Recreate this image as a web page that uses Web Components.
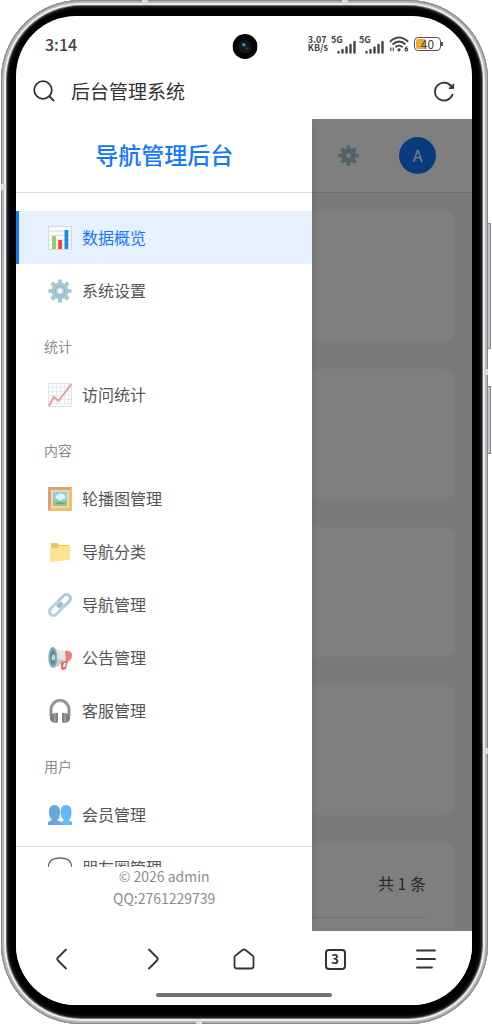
<!DOCTYPE html>
<html lang="zh-CN">
<head>
<meta charset="utf-8">
<meta name="viewport" content="width=device-width, initial-scale=1">
<title>后台管理系统</title>
<style>
    :root
    {
        --primary: #1677ff;
        --text: #555;
        --muted: #8c8c8c;
        --line: #dcdcdc;
        --ink: #333;
    }

    body
    {
        margin: 0;
        background: #fff;
        font-family: "Noto Sans CJK SC", "Noto Sans", sans-serif;
        color: var(--text);
    }
</style>
</head>
<body>

<phone-frame>
    <status-bar></status-bar>
    <address-bar>后台管理系统</address-bar>
    <admin-page>
        <side-drawer slot="drawer">
            <span slot="title">导航管理后台</span>
            <nav-item icon="chart" active>数据概览</nav-item>
            <nav-item icon="gear">系统设置</nav-item>
            <nav-section>统计</nav-section>
            <nav-item icon="trend">访问统计</nav-item>
            <nav-section>内容</nav-section>
            <nav-item icon="picture">轮播图管理</nav-item>
            <nav-item icon="folder">导航分类</nav-item>
            <nav-item icon="link">导航管理</nav-item>
            <nav-item icon="horn">公告管理</nav-item>
            <nav-item icon="headphone">客服管理</nav-item>
            <nav-section>用户</nav-section>
            <nav-item icon="users">会员管理</nav-item>
            <nav-item icon="bubble">朋友圈管理</nav-item>
            <div slot="footer">© 2026 admin</div>
            <div slot="footer">QQ:2761229739</div>
        </side-drawer>
        <stat-card></stat-card>
        <stat-card></stat-card>
        <stat-card></stat-card>
        <stat-card></stat-card>
        <stat-card><div>共 1 条</div></stat-card>
    </admin-page>
    <browser-nav></browser-nav>
</phone-frame>

<script>
// ICONS - all drawn on a 24x24 grid
const icons = {
    chart: `<rect x=".5" y=".5" width="23" height="23" fill="#fafafa" stroke="#d5dadd"/>
        <path d="M1 5h22M1 9.500h22M1 14h22M1 18.500h22" stroke="#d3dce0" stroke-width=".8"/>
        <path d="M4 10h4v13H4z" fill="#9ccc65"/><path d="M10.200 14h3.800v9h-3.800z" fill="#f44336"/><path d="M16.500 4h3.800v19h-3.800z" fill="#1592e6"/>`,
    gear: `<g fill="#a5c6d3"><circle cx="12" cy="12" r="8.500"/>
        <rect x="10" y=".3" width="4" height="23.400" rx="1.500"/><rect x=".3" y="10" width="23.400" height="4" rx="1.500"/>
        <g transform="rotate(45 12 12)"><rect x="10" y=".3" width="4" height="23.400" rx="1.500"/><rect x=".3" y="10" width="23.400" height="4" rx="1.500"/></g></g>
        <circle cx="12" cy="12" r="5" fill="#8bb4c5"/><circle cx="12" cy="12" r="4" fill="#b9d2dc"/><circle cx="12" cy="12" r="2.400" fill="#fff"/>`,
    trend: `<rect x=".5" y=".5" width="23" height="23" fill="#fdfdfd" stroke="#dde3e6"/>
        <path d="M4.500 0v24M8.500 0v24M12.500 0v24M16.500 0v24M20.500 0v24M0 4.500h24M0 8.500h24M0 12.500h24M0 16.500h24M0 20.500h24" stroke="#dfe6ea" stroke-width=".8"/>
        <path d="M.8 22.800 6 14l4.500 4L23.300 1.200" fill="none" stroke="#ec8b84" stroke-width="1.500"/>`,
    picture: `<path d="M0 0h24v24H0z" fill="#f0c16c"/><path d="M0 0h24l-4 4H4v16l-4 4z" fill="#dba276"/>
        <path d="M3 3h18v18H3z" fill="#eed5ad"/><path d="M5 5h14v14H5z" fill="#91cdf1"/>
        <path d="M5 14q4-2 7 0t7-1v6H5z" fill="#9bc27e"/><path d="M7 17q5-4 11 0z" fill="#6aa77d"/>
        <path d="M8 11q-1-3 2-3 1-3 4-1 3 0 3 3 0 2-3 2-2 3-4 0-2 0-2-1" fill="#e7f4fc"/>`,
    folder: `<path d="M3 4q0-1 1-1h5q1 0 1.500 1.500L11 5h10q1 0 1 1v13H2z" fill="#efc466"/>
        <path d="M2 9q0-1 1-1h5q1 0 2-1l1-1h10q1.500 0 1.500 1.500L22 19q0 1-1 1L3 22q-1 0-1-1z" fill="#fde28f"/>`,
    link: `<g fill="none" stroke-width="3"><rect x="-7.500" y="-4" width="15" height="8" rx="4" transform="translate(16 8) rotate(-45)" stroke="#a9cadb"/>
        <rect x="-7.500" y="-4" width="15" height="8" rx="4" transform="translate(8 16) rotate(-45)" stroke="#b4d2e1"/>
        <path d="m10 14 4-4" stroke="#88b2c8" stroke-width="2"/></g>`,
    horn: `<path d="M5 2 19 6v10L6 22z" fill="#e5e8ea"/><path d="m6 13 13 1v2L6 22z" fill="#c8cdd0"/>
        <path d="M17 5q6-1 7 4 0 6-6 7z" fill="#f47b74"/><path d="m13 16 7-1-2 8q-3 2-5 0z" fill="#e96d66"/><path d="m16 17 2 0-1 4h-2z" fill="#fff"/>
        <ellipse cx="4.800" cy="11.500" rx="4.500" ry="10.500" fill="#82adb6"/><ellipse cx="5" cy="11.500" rx="2.600" ry="7.500" fill="#548d9a"/><ellipse cx="5.500" cy="11.500" rx="1.800" ry="3" fill="#b7d9e2"/>`,
    headphone: `<path d="M3 17v-6a9 9.500 0 0 1 18 0v6" fill="none" stroke="#8c8c8c" stroke-width="3"/>
        <path d="M4 11a8 8.500 0 0 1 16 0" fill="none" stroke="#b8b8b8"/>
        <path d="M7 14q3-1 3 1v7q0 2-2 2-5 0-6-4-1-5 5-6M17 14q-3-1-3 1v7q0 2 2 2 5 0 6-4 1-5-5-6" fill="#808080"/>
        <path d="M7 14v10M17 14v10" stroke="#a8a8a8" stroke-width="1.200"/>`,
    users: `<path d="M1 9q0-7 5.500-7T12 9t-3 8l4 2v3H0v-3l4-2Q1 14 1 9" fill="#6aa5df"/>
        <path d="M12.500 9q0-7 5.500-7t5.500 7-3 8l3.500 2v3H13v-3l3-2q-3.500-3-3.500-8" fill="#64b9f5"/>`,
    bubble: `<path d="M12 2Q.3 2 .3 11.500T11 21q0 2-2 3 5 0 7-4.500 7.700-2 7.700-8Q23.700 2 12 2Z" fill="none" stroke="#666" stroke-width="1.300"/>
        <circle cx="6" cy="12" r="1.100" fill="#555"/><circle cx="12" cy="12" r="1.100" fill="#555"/><circle cx="18" cy="12" r="1.100" fill="#555"/>`
};

function icon(name) {
    return `<svg class="icon" viewBox="0 0 24 24" aria-hidden="true">${icons[name]}</svg>`;
}

function define(tag, render) {
    customElements.define(tag, class extends HTMLElement {
        connectedCallback() {
            if (this.shadowRoot) return;
            this.attachShadow({ mode: 'open' }).innerHTML = render(this);
        }
    });
}


// PHONE BODY
define('phone-frame', () => `
    <style>
        :host
        {
            display: block;
            position: relative;
            box-sizing: border-box;
            height: 100vh;
            margin: 0 4px 0 1px;
            padding: 16px 16px 19px 15px;
            border-radius: 80px;
            background: #000;
            box-shadow: inset 0 0 0 1px #87878b, inset 0 0 0 3px #b5b5b9, inset 0 0 0 5px #ececf0, inset 0 0 0 6px #6d6d70, inset 0 0 3px 7px #333;
        }

        .screen
        {
            display: flex;
            flex-direction: column;
            height: 100%;
            overflow: hidden;
            border-radius: 60px;
            background: #fff;
        }

        .camera
        {
            position: absolute;
            top: 34px;
            left: 50%;
            width: 25px;
            height: 25px;
            transform: translateX(-50%);
        }

        .key
        {
            position: absolute;
            left: 100%;
            box-sizing: border-box;
            width: 3px;
            border: 1px solid #8a8a8e;
            border-left: 0;
            background: #c4c4c9;
        }

        .power { top: 223px; height: 126px; }
        .volume { top: 386px; height: 68px; }

        .band
        {
            position: absolute;
            width: 6px;
            height: 6px;
            background: #dcdce0;
        }
    </style>
    <div class="screen"><slot></slot></div>
    <svg class="camera" viewBox="0 0 25 25" aria-hidden="true">
        <circle cx="12.500" cy="12.500" r="12.500" fill="#050505"/>
        <circle cx="12.500" cy="12.500" r="6" fill="#11161a" stroke="#1d1d1f"/>
        <circle cx="11.500" cy="11" r="2" fill="#27546c"/><circle cx="11" cy="10.500" r="1" fill="#6fb6d6"/><circle cx="14.500" cy="14.500" r="1.300" fill="#1d4760"/>
    </svg>
    <div class="key power"></div>
    <div class="key volume"></div>
    <div class="band" style="left: 29%; top: 0; height: 4px"></div>
    <div class="band" style="left: 70%; top: 0; height: 4px"></div>
    <div class="band" style="left: 40%; bottom: 0; height: 4px"></div>
    <div class="band" style="left: 0; top: 18%; width: 4px"></div>
    <div class="band" style="right: 0; top: 36%; width: 4px"></div>
    <div class="band" style="right: 0; top: 73%; width: 4px"></div>
`);


// STATUS BAR
const signal = `<span class="signal"><b>5G</b><svg width="25" height="16" viewBox="0 0 25 16" aria-hidden="true">
    <path d="M8.500 13v.5M12.500 11v2.500M16.500 8.500v5M20.500 6v7.500M24.500 3v10.500" stroke="#444" stroke-width="2.400" stroke-linecap="round" transform="translate(-1)"/></svg></span>`;

define('status-bar', () => `
    <style>
        :host
        {
            display: flex;
            justify-content: space-between;
            align-items: center;
            box-sizing: border-box;
            flex: none;
            height: 58px;
            padding: 0 29px 2px;
            color: #444;
        }

        time { font-size: 16px; font-weight: 500; }

        .right { display: flex; align-items: center; gap: 3px; }

        .speed { font-size: 9px; line-height: 8px; font-weight: 700; }

        .speed div { height: 8px; }

        .signal { position: relative; display: block; height: 16px; }

        .signal b { position: absolute; left: 0; top: 0; font-size: 9px; line-height: 8px; }

        .wifi { margin: 0 2px; }

        .battery { display: flex; align-items: center; }

        .cell
        {
            box-sizing: border-box;
            width: 27px;
            height: 14px;
            border: 1px solid #555;
            border-radius: 4px;
            background: linear-gradient(90deg, #f3a93c 40%, #fff 40%) content-box;
            padding: 1px;
            font-size: 12px;
            line-height: 10px;
            text-align: center;
        }

        .battery::after { content: ""; width: 2px; height: 4px; background: #555; }
    </style>
    <time>3:14</time>
    <div class="right">
        <div class="speed"><div>3.07</div><div>KB/s</div></div>
        ${signal}${signal}
        <svg class="wifi" width="20" height="16" viewBox="0 0 20 16" aria-hidden="true">
            <g fill="none" stroke="#444" stroke-width="1.800"><path d="M.8 5.800Q10-2.800 19.200 5.800M3.500 8.500q6.500-6 13 0M6.300 11.200q3.700-3.200 7.400 0"/>
            <path d="M1.800 11.500v3.500M4.300 11.500v3.500" stroke-width="1.200"/><path d="M18.500 10.500q-2.500 1-2.500 3" stroke-width="1.200"/><circle cx="17.500" cy="13.700" r="1.300" stroke-width="1.100"/></g>
            <circle cx="10" cy="13.800" r="1.600" fill="#444"/>
        </svg>
        <div class="battery"><div class="cell">40</div></div>
    </div>
`);


// ADDRESS BAR
define('address-bar', () => `
    <style>
        :host
        {
            display: flex;
            justify-content: space-between;
            align-items: center;
            flex: none;
            height: 34px;
            margin-bottom: 11px;
            padding: 0 17px;
            color: var(--ink);
        }

        button
        {
            display: flex;
            align-items: center;
            gap: 16px;
            padding: 0;
            border: 0;
            background: none;
            font: inherit;
            font-size: 19px;
            line-height: 28px;
            color: inherit;
        }

        svg { fill: none; stroke: var(--ink); stroke-width: 1.8; stroke-linecap: round; }
    </style>
    <button type="button">
        <svg width="22" height="22" viewBox="0 0 22 22" aria-hidden="true"><circle cx="10" cy="10" r="8.800"/><path d="m16.500 16.500 4 4"/></svg>
        <span><slot></slot></span>
    </button>
    <button type="button" aria-label="刷新">
        <svg width="21" height="21" viewBox="0 0 21 21" aria-hidden="true"><path d="M18.500 13.500a9 9 0 1 1-.5-7"/><path d="M19.600 3.200v4.200h-4.200z" fill="#333" stroke-width="1"/></svg>
    </button>
`);


// ADMIN PAGE - content dimmed below the open drawer
define('admin-page', () => `
    <style>
        :host
        {
            display: block;
            position: relative;
            flex: 1;
            min-height: 0;
            overflow: hidden;
            background: #f5f5f5;
        }

        header
        {
            display: flex;
            justify-content: flex-end;
            align-items: center;
            gap: 40px;
            height: 73px;
            padding-right: 36px;
            border-bottom: 1px solid var(--line);
            background: #fff;
        }

        button { padding: 0; border: 0; background: none; font: inherit; }

        .icon { display: block; width: 21px; height: 21px; }

        .avatar
        {
            width: 37px;
            height: 37px;
            padding-bottom: 2px;
            border-radius: 50%;
            background: var(--primary);
            color: #fff;
            font-size: 16px;
        }

        main { display: grid; gap: 28px; padding: 18px; }

        .mask { position: absolute; inset: 0; background: rgba(0, 0, 0, .5); }

        ::slotted(side-drawer) { position: absolute; top: 0; bottom: 0; left: 0; width: 65%; }
    </style>
    <header>
        <button type="button" aria-label="设置">${icon('gear')}</button>
        <button type="button" class="avatar">A</button>
    </header>
    <main><slot></slot></main>
    <div class="mask"></div>
    <slot name="drawer"></slot>
`);

define('stat-card', () => `
    <style>
        :host
        {
            display: block;
            box-sizing: border-box;
            min-height: 130px;
            padding: 27px 28px;
            border-radius: 9px;
            background: #fff;
        }

        ::slotted(div)
        {
            padding-bottom: 21px;
            border-bottom: 1px solid var(--line);
            font-size: 16px;
            line-height: 26px;
            text-align: right;
        }
    </style>
    <slot></slot>
`);


// DRAWER
define('side-drawer', () => `
    <style>
        :host
        {
            display: flex;
            flex-direction: column;
            background: #fff;
            box-shadow: 0 0 9px rgba(0, 0, 0, .15);
        }

        h1
        {
            flex: none;
            margin: 0;
            padding: 18px 0 20px;
            border-bottom: 1px solid var(--line);
            font-size: 23px;
            line-height: 35px;
            font-weight: 500;
            text-align: center;
            color: var(--primary);
        }

        nav
        {
            flex: 1;
            min-height: 0;
            margin-bottom: 64px;
            padding-top: 18px;
            overflow: hidden;
            box-sizing: border-box;
        }

        footer
        {
            position: absolute;
            right: 0;
            bottom: 0;
            left: 0;
            padding: 18px 0 22px;
            border-top: 1px solid var(--line);
            font-size: 14px;
            line-height: 22px;
            text-align: center;
            color: var(--muted);
        }
    </style>
    <h1><slot name="title"></slot></h1>
    <nav><slot></slot></nav>
    <footer><slot name="footer"></slot></footer>
`);

define('nav-section', () => `
    <style>
        :host
        {
            display: block;
            padding: 19px 28px 12px;
            font-size: 14px;
            line-height: 20px;
            color: var(--muted);
        }
    </style>
    <slot></slot>
`);

define('nav-item', (el) => `
    <style>
        :host { display: block; }

        a
        {
            display: flex;
            align-items: center;
            gap: 10px;
            height: 53px;
            padding-left: 29px;
            border-left: 3px solid transparent;
            font-size: 16px;
            line-height: 24px;
            text-decoration: none;
            color: var(--text);
        }

        span { padding-bottom: 2px; }

        :host([active]) a
        {
            border-color: var(--primary);
            background: #e6f0ff;
            color: var(--primary);
        }

        .icon { width: 24px; height: 24px; }
    </style>
    <a href="#${el.getAttribute('icon')}">${icon(el.getAttribute('icon'))}<span><slot></slot></span></a>
`);


// BROWSER BUTTONS
define('browser-nav', () => `
    <style>
        :host { display: block; flex: none; height: 74px; background: #fff; }

        nav { display: grid; grid-template-columns: repeat(5, 1fr); height: 56px; }

        button
        {
            display: flex;
            justify-content: center;
            align-items: center;
            padding: 0;
            border: 0;
            background: none;
            font: inherit;
            color: var(--ink);
        }

        svg { fill: none; stroke: var(--ink); stroke-width: 1.8; stroke-linecap: round; stroke-linejoin: round; }

        .tabs
        {
            box-sizing: border-box;
            width: 21px;
            height: 21px;
            border: 2px solid var(--ink);
            border-radius: 4px;
            font-size: 13px;
            line-height: 16px;
            font-weight: 700;
        }

        .home-line { width: 176px; height: 4px; margin: 6px auto 0; border-radius: 2px; background: #737373; }
    </style>
    <nav>
        <button type="button" aria-label="后退"><svg width="22" height="22" viewBox="0 0 22 22"><path d="m15 1.500-8 8q-1.500 1.500 0 3l8 8"/></svg></button>
        <button type="button" aria-label="前进"><svg width="22" height="22" viewBox="0 0 22 22"><path d="m7 1.500 8 8q1.500 1.500 0 3l-8 8"/></svg></button>
        <button type="button" aria-label="主页"><svg width="22" height="22" viewBox="0 0 22 22"><path d="M1.500 9.500q0-1.300 1-2L9.500 2q1.500-1 3 0l7 5.500q1 .7 1 2V18q0 2.500-2.500 2.500H4q-2.500 0-2.500-2.500z"/></svg></button>
        <button type="button"><span class="tabs">3</span></button>
        <button type="button" aria-label="菜单"><svg width="22" height="22" viewBox="0 0 22 22"><path d="M2 2.500h18M2 11h18M2 19.500h15"/></svg></button>
    </nav>
    <div class="home-line"></div>
`);
</script>
</body>
</html>
